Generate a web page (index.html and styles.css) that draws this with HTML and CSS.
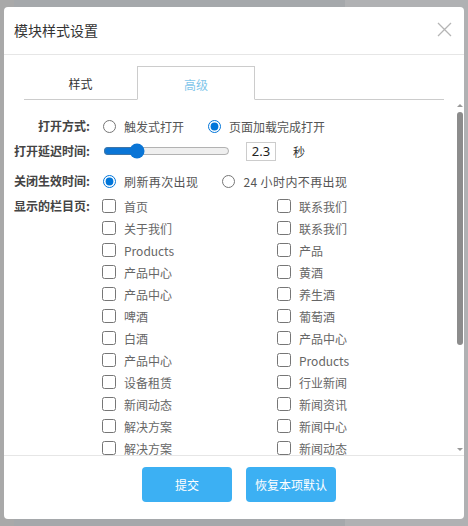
FILE: index.html
```html
<!DOCTYPE html>
<html lang="zh">
<head>
<meta charset="utf-8">
<title>模块样式设置</title>
<link rel="stylesheet" href="styles.css">
</head>
<body>
<div class="dialog">
  <div class="header">
    <span class="title">模块样式设置</span>
    <svg class="close" width="15" height="15" viewBox="0 0 15 15"><path d="M1 1L14 14M14 1L1 14" stroke="#b5b5b5" stroke-width="1.3" fill="none"/></svg>
  </div>
  <div class="tabs">
    <div class="tab">样式</div>
    <div class="tab active">高级</div>
  </div>
  <div class="body">
    <div class="main">
      <div class="row r1">
        <div class="label">打开方式:</div>
        <label class="opt"><input type="radio" name="open"><span>触发式打开</span></label>
        <label class="opt"><input type="radio" name="open" checked><span>页面加载完成打开</span></label>
      </div>
      <div class="row r2">
        <div class="label">打开延迟时间:</div>
        <input class="range" type="range" min="0" max="10" step="0.1" value="2.3">
        <span class="val">2.3</span>
        <span class="unit">秒</span>
      </div>
      <div class="row r3">
        <div class="label">关闭生效时间:</div>
        <label class="opt"><input type="radio" name="close" checked><span>刷新再次出现</span></label>
        <label class="opt"><input type="radio" name="close"><span>24 小时内不再出现</span></label>
      </div>
      <div class="row r4">
        <div class="label">显示的栏目页:</div>
        <div class="grid">
          <label class="chk"><input type="checkbox"><span>首页</span></label>
          <label class="chk"><input type="checkbox"><span>联系我们</span></label>
          <label class="chk"><input type="checkbox"><span>关于我们</span></label>
          <label class="chk"><input type="checkbox"><span>联系我们</span></label>
          <label class="chk"><input type="checkbox"><span>Products</span></label>
          <label class="chk"><input type="checkbox"><span>产品</span></label>
          <label class="chk"><input type="checkbox"><span>产品中心</span></label>
          <label class="chk"><input type="checkbox"><span>黄酒</span></label>
          <label class="chk"><input type="checkbox"><span>产品中心</span></label>
          <label class="chk"><input type="checkbox"><span>养生酒</span></label>
          <label class="chk"><input type="checkbox"><span>啤酒</span></label>
          <label class="chk"><input type="checkbox"><span>葡萄酒</span></label>
          <label class="chk"><input type="checkbox"><span>白酒</span></label>
          <label class="chk"><input type="checkbox"><span>产品中心</span></label>
          <label class="chk"><input type="checkbox"><span>产品中心</span></label>
          <label class="chk"><input type="checkbox"><span>Products</span></label>
          <label class="chk"><input type="checkbox"><span>设备租赁</span></label>
          <label class="chk"><input type="checkbox"><span>行业新闻</span></label>
          <label class="chk"><input type="checkbox"><span>新闻动态</span></label>
          <label class="chk"><input type="checkbox"><span>新闻资讯</span></label>
          <label class="chk"><input type="checkbox"><span>解决方案</span></label>
          <label class="chk"><input type="checkbox"><span>新闻中心</span></label>
          <label class="chk"><input type="checkbox"><span>解决方案</span></label>
          <label class="chk"><input type="checkbox"><span>新闻动态</span></label>
        </div>
      </div>
    </div>
    <div class="scrollbar">
      <div class="arrow up"></div>
      <div class="track"><div class="thumb"></div></div>
      <div class="arrow down"></div>
    </div>
  </div>
  <div class="footer">
    <button class="btn">提交</button>
    <button class="btn">恢复本项默认</button>
  </div>
</div>
</body>
</html>
```
FILE: styles.css
```css
html, body {
  margin: 0;
  padding: 0;
}
body {
  width: 468px;
  height: 526px;
  overflow: hidden;
  background: linear-gradient(to right, #a9a9a9 0, #a9a9a9 14px, #a5a8ab 14px, #a5a8ab 345px, #b0b1b3 345px);
  font-family: "Noto Sans CJK SC", "Noto Sans", sans-serif;
  padding-top: 7px;
  box-sizing: border-box;
}
.dialog {
  margin-left: 4px;
  width: 460px;
  height: 512px;
  background: #fff;
  border-radius: 4px;
  display: flex;
  flex-direction: column;
  overflow: hidden;
}
.header {
  height: 47px;
  flex: none;
  display: flex;
  align-items: center;
  justify-content: space-between;
  padding: 0 12px 0 10px;
  border-bottom: 1px solid #e6e6e6;
}
.title {
  font-size: 14px;
  color: #333;
  line-height: 20px;
  margin-top: -2px;
}
.close {
  display: block;
  margin-top: -2px;
}
.tabs {
  flex: none;
  margin: 11px 20px 0;
  height: 33px;
  border-bottom: 1px solid #ccc;
  display: flex;
}
.tab {
  width: 113px;
  height: 33px;
  box-sizing: border-box;
  display: flex;
  align-items: center;
  justify-content: center;
  font-size: 12px;
  color: #333;
  padding-top: 1px;
}
.tab.active {
  width: 118px;
  height: 34px;
  border: 1px solid #ccc;
  border-bottom: 1px solid #fff;
  background: #fff;
  color: #7fc6ea;
  padding-top: 2px;
}
.body {
  flex: none;
  height: 355px;
  display: flex;
}
.main {
  flex: 1;
  overflow: hidden;
  padding-top: 14px;
}
.row {
  display: flex;
  align-items: center;
  min-height: 24px;
}
.r2 { margin-top: 1px; }
.r3 { margin-top: 6px; }
.r4 { margin-top: 2px; align-items: flex-start; }
.label {
  width: 82px;
  margin-left: 4px;
  margin-right: 13px;
  display: flex;
  justify-content: flex-end;
  white-space: nowrap;
  font-size: 12px;
  font-weight: bold;
  color: #444;
  line-height: 24px;
  flex: none;
}
.r4 .label { line-height: 22px; }
.opt {
  display: flex;
  align-items: center;
  font-size: 12px;
  color: #555;
  margin-right: 24px;
  white-space: nowrap;
}
.opt input {
  margin: 0 8px 0 0;
  width: 13px;
  height: 13px;
  accent-color: #0075d9;
}
.r3 .opt span { letter-spacing: 0.4px; }
.range {
  margin: 0;
  width: 127px;
  accent-color: #0a75d6;
}
.val {
  margin-left: 16px;
  width: 30px;
  height: 19px;
  box-sizing: border-box;
  border: 1px solid #ccc;
  font-size: 13px;
  color: #222;
  display: flex;
  align-items: center;
  justify-content: center;
  font-family: "Noto Sans", sans-serif;
}
.unit {
  margin-left: 17px;
  font-size: 12px;
  color: #333;
}
.grid {
  display: grid;
  grid-template-columns: 175px 160px;
  grid-auto-rows: 22px;
  margin-left: -1px;
}
.chk {
  display: flex;
  align-items: center;
  font-size: 12px;
  color: #666;
  white-space: nowrap;
}
.chk input {
  margin: 0 8px 0 0;
  width: 14px;
  height: 14px;
}
.scrollbar {
  flex: none;
  width: 9px;
  display: flex;
  flex-direction: column;
  align-items: center;
}
.arrow {
  width: 0;
  height: 0;
  border-left: 3px solid transparent;
  border-right: 3px solid transparent;
}
.arrow.up {
  margin-top: 4px;
  border-bottom: 3px solid #999;
}
.arrow.down {
  margin-bottom: 4px;
  border-top: 3px solid #999;
}
.track {
  flex: 1;
  width: 6px;
  padding-top: 5px;
}
.thumb {
  width: 6px;
  height: 233px;
  background: #8c8c8c;
  border-radius: 3px;
}
.footer {
  flex: 1;
  border-top: 1px solid #e6e6e6;
  display: flex;
  align-items: flex-start;
  gap: 14px;
  padding: 11px 0 0 138px;
}
.btn {
  width: 90px;
  height: 35px;
  border: none;
  border-radius: 4px;
  background: #3cb0f3;
  color: #fff;
  font-family: "Noto Sans CJK SC", sans-serif;
  font-size: 12px;
  white-space: nowrap;
  padding: 0;
}
```
